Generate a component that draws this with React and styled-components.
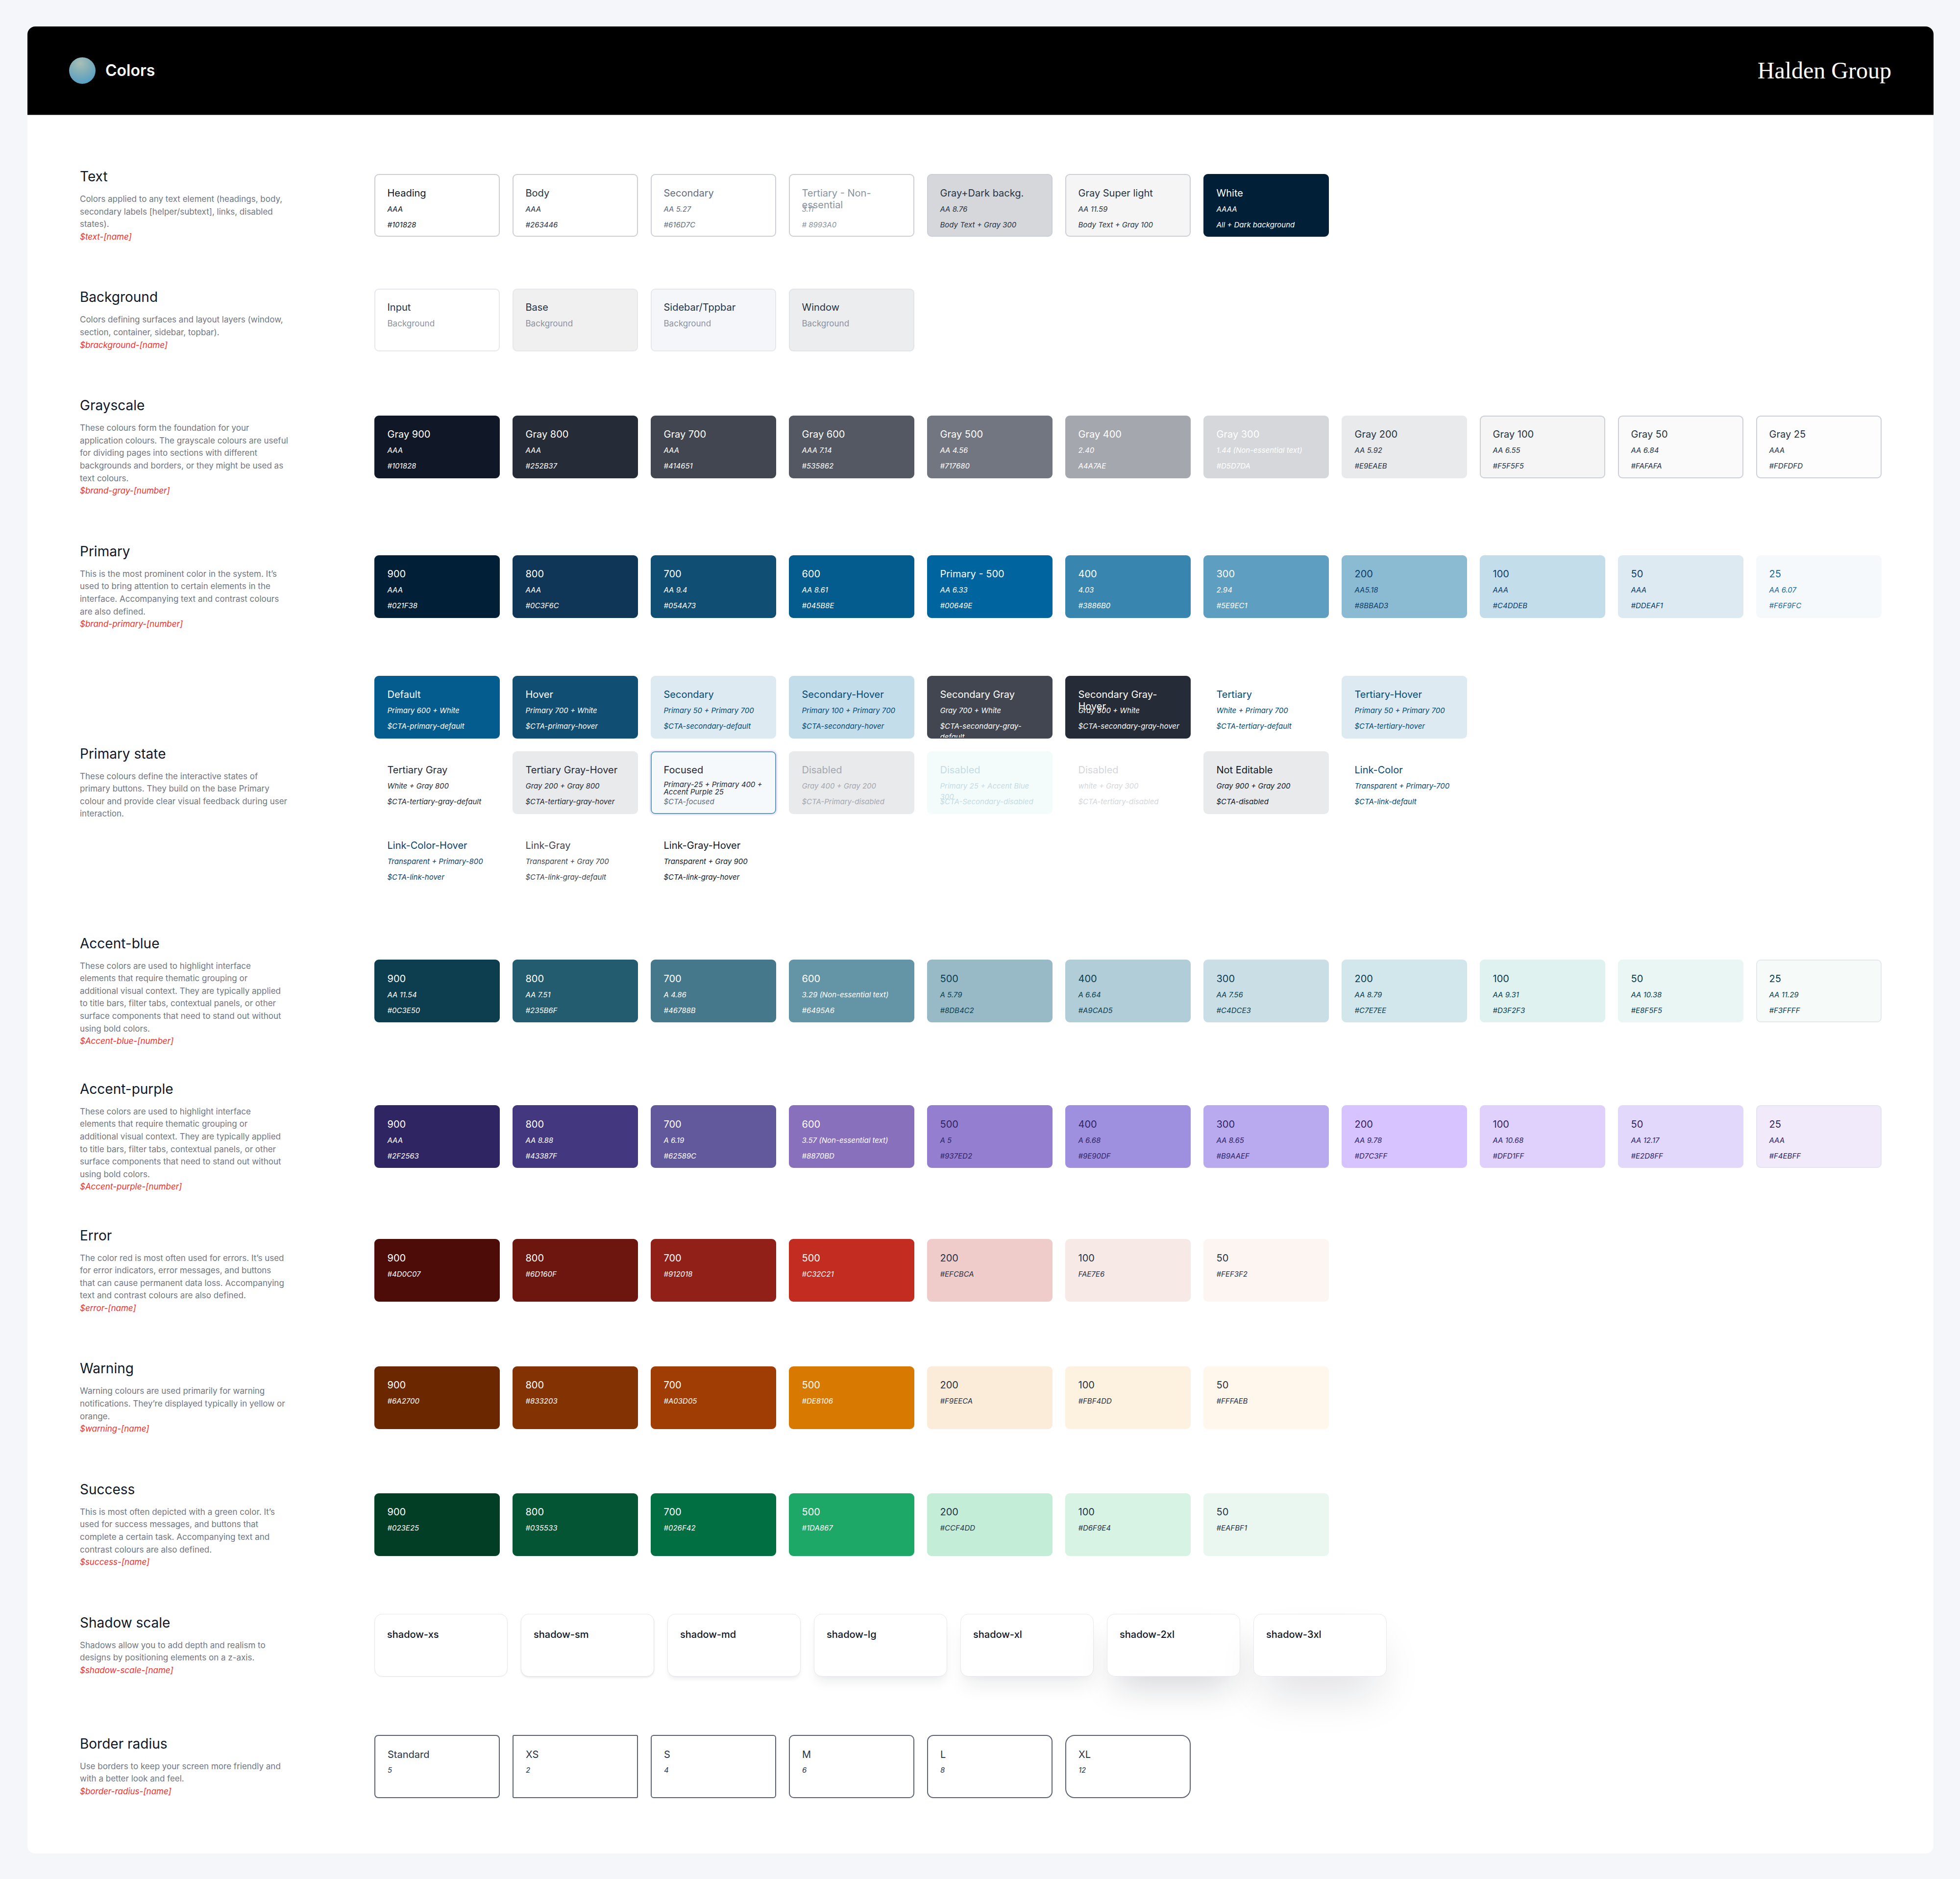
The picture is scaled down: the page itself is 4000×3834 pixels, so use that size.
import React from "react"
import styled, { createGlobalStyle } from "styled-components"

const GlobalStyle = createGlobalStyle`
html, body {
    margin: 0;
    padding: 0;
    background: #f5f6fa;
}
* {
    box-sizing: border-box;
}
`

const WHITE = "#FFFFFF"
const INK = "#263446"
const P700 = "#054A73"
const BLUE = "#0C3E50"
const PURPLE = "#2F2563"
const EDGE = "#CDCFD6"

const card = (title, sub, code, bg, fg, extra = {}) => ({ title, sub, code, bg, fg, ...extra })

const textCards = [
    card("Heading", "AAA", "#101828", WHITE, "#101828", { edge: EDGE }),
    card("Body", "AAA", "#263446", WHITE, "#263446", { edge: EDGE }),
    card("Secondary", "AA 5.27", "#616D7C", WHITE, "#616D7C", { edge: EDGE }),
    card("Tertiary - Non-essential", "3.11", "# 8993A0", WHITE, "#8993A0", { edge: EDGE }),
    card("Gray+Dark backg.", "AA 8.76", "Body Text + Gray 300", "#D5D7DA", INK, { edge: EDGE }),
    card("Gray Super light", "AA 11.59", "Body Text + Gray 100", "#F5F5F5", INK, { edge: EDGE }),
    card("White", "AAAA", "All + Dark background", "#021F38", WHITE),
]

const backgroundCards = [
    { title: "Input", bg: WHITE, edge: "#E6E8EC" },
    { title: "Base", bg: "#F0F0F0", edge: "#E6E8EC" },
    { title: "Sidebar/Tppbar", bg: "#F4F6F9", edge: "#E6E8EC" },
    { title: "Window", bg: "#ECEDEE", edge: "#E2E4E8" },
]

const grayCards = [
    card("Gray 900", "AAA", "#101828", "#101828", WHITE),
    card("Gray 800", "AAA", "#252B37", "#252B37", WHITE),
    card("Gray 700", "AAA", "#414651", "#414651", WHITE),
    card("Gray 600", "AAA 7.14", "#535862", "#535862", WHITE),
    card("Gray 500", "AA 4.56", "#717680", "#717680", WHITE),
    card("Gray 400", "2.40", "A4A7AE", "#A4A7AE", WHITE),
    card("Gray 300", "1.44 (Non-essential text)", "#D5D7DA", "#D5D7DA", WHITE),
    card("Gray 200", "AA 5.92", "#E9EAEB", "#E9EAEB", INK),
    card("Gray 100", "AA 6.55", "#F5F5F5", "#F5F5F5", INK, { edge: EDGE }),
    card("Gray 50", "AA 6.84", "#FAFAFA", "#FAFAFA", INK, { edge: EDGE }),
    card("Gray 25", "AAA", "#FDFDFD", "#FDFDFD", INK, { edge: EDGE }),
]

const primaryCards = [
    card("900", "AAA", "#021F38", "#021F38", WHITE),
    card("800", "AAA", "#0C3F6C", "#0F3557", WHITE),
    card("700", "AA 9.4", "#054A73", "#114E73", WHITE),
    card("600", "AA 8.61", "#045B8E", "#045B8E", WHITE),
    card("Primary - 500", "AA 6.33", "#00649E", "#00649E", WHITE),
    card("400", "4.03", "#3886B0", "#3886B0", WHITE),
    card("300", "2.94", "#5E9EC1", "#5E9EC1", WHITE),
    card("200", "AA5.18", "#8BBAD3", "#8BBAD3", "#0C3F6C"),
    card("100", "AAA", "#C4DDEB", "#C4DDEB", "#0C3F6C"),
    card("50", "AAA", "#DDEAF1", "#DDEAF1", "#0C3F6C"),
    card("25", "AA 6.07", "#F6F9FC", "#F6F9FC", "#1D6A96"),
]

const stateCards = [
    card("Default", "Primary 600 + White", "$CTA-primary-default", "#045B8E", WHITE),
    card("Hover", "Primary 700 + White", "$CTA-primary-hover", "#114E73", WHITE),
    card("Secondary", "Primary 50 + Primary 700", "$CTA-secondary-default", "#DDEAF1", P700),
    card("Secondary-Hover", "Primary 100 + Primary 700", "$CTA-secondary-hover", "#C4DDEB", P700),
    card("Secondary Gray", "Gray 700 + White", "$CTA-secondary-gray-default", "#414651", WHITE),
    card("Secondary Gray-Hover", "Gray 800 + White", "$CTA-secondary-gray-hover", "#252B37", WHITE),
    card("Tertiary", "White + Primary 700", "$CTA-tertiary-default", WHITE, P700),
    card("Tertiary-Hover", "Primary 50 + Primary 700", "$CTA-tertiary-hover", "#DDEAF1", P700),
    card("Tertiary Gray", "White + Gray 800", "$CTA-tertiary-gray-default", WHITE, "#252B37"),
    card("Tertiary Gray-Hover", "Gray 200 + Gray 800", "$CTA-tertiary-gray-hover", "#E9EAEB", "#252B37"),
    card("Focused", "Primary-25 + Primary 400 + Accent Purple 25", "$CTA-focused", "#F6F9FC", "#1F2937", { focused: true, codeColor: "#616D7C" }),
    card("Disabled", "Gray 400 + Gray 200", "$CTA-Primary-disabled", "#E9EAEB", "#A4A7AE"),
    card("Disabled", "Primary 25 + Accent Blue 300", "$CTA-Secondary-disabled", "#F4FBFB", "#C4DCE3"),
    card("Disabled", "white + Gray 300", "$CTA-tertiary-disabled", WHITE, "#D5D7DA"),
    card("Not Editable", "Gray 900 + Gray 200", "$CTA-disabled", "#E9EAEB", "#101828"),
    card("Link-Color", "Transparent + Primary-700", "$CTA-link-default", WHITE, P700),
    card("Link-Color-Hover", "Transparent + Primary-800", "$CTA-link-hover", WHITE, "#0C3F6C"),
    card("Link-Gray", "Transparent + Gray 700", "$CTA-link-gray-default", WHITE, "#414651"),
    card("Link-Gray-Hover", "Transparent + Gray 900", "$CTA-link-gray-hover", WHITE, "#101828"),
]

const accentBlueCards = [
    card("900", "AA 11.54", "#0C3E50", "#0C3E50", WHITE),
    card("800", "AA 7.51", "#235B6F", "#235B6F", WHITE),
    card("700", "A 4.86", "#46788B", "#46788B", WHITE),
    card("600", "3.29 (Non-essential text)", "#6495A6", "#6495A6", WHITE),
    card("500", "A 5.79", "#8DB4C2", "#97BAC6", BLUE),
    card("400", "A 6.64", "#A9CAD5", "#B0CDD8", BLUE),
    card("300", "AA 7.56", "#C4DCE3", "#CADEE5", BLUE),
    card("200", "AA 8.79", "#C7E7EE", "#D2E7EC", BLUE),
    card("100", "AA 9.31", "#D3F2F3", "#DFF2F0", BLUE),
    card("50", "AA 10.38", "#E8F5F5", "#EAF6F4", BLUE),
    card("25", "AA 11.29", "#F3FFFF", "#F6FBFA", BLUE, { edge: "#E6E8EC" }),
]

const accentPurpleCards = [
    card("900", "AAA", "#2F2563", "#2F2563", WHITE),
    card("800", "AA 8.88", "#43387F", "#43387F", WHITE),
    card("700", "A 6.19", "#62589C", "#62589C", WHITE),
    card("600", "3.57 (Non-essential text)", "#8870BD", "#8870BD", WHITE),
    card("500", "A 5", "#937ED2", "#937ED0", PURPLE),
    card("400", "A 6.68", "#9E90DF", "#9E90DF", PURPLE),
    card("300", "AA 8.65", "#B9AAEF", "#B9AAEF", PURPLE),
    card("200", "AA 9.78", "#D7C3FF", "#D7C3FF", PURPLE),
    card("100", "AA 10.68", "#DFD1FF", "#DFD1FB", PURPLE),
    card("50", "AA 12.17", "#E2D8FF", "#E2D8FC", PURPLE),
    card("25", "AAA", "#F4EBFF", "#F0EAFB", PURPLE, { edge: "#E6E4F0" }),
]

const shortCard = (title, sub, bg, fg) => ({ title, sub, bg, fg })

const errorCards = [
    shortCard("900", "#4D0C07", "#4D0C07", WHITE),
    shortCard("800", "#6D160F", "#6D160F", WHITE),
    shortCard("700", "#912018", "#912018", WHITE),
    shortCard("500", "#C32C21", "#C32C21", WHITE),
    shortCard("200", "#EFCBCA", "#EFCBCA", INK),
    shortCard("100", "FAE7E6", "#F7E9E6", INK),
    shortCard("50", "#FEF3F2", "#FCF5F2", INK),
]

const warningCards = [
    shortCard("900", "#6A2700", "#6A2700", WHITE),
    shortCard("800", "#833203", "#833203", WHITE),
    shortCard("700", "#A03D05", "#A03D05", WHITE),
    shortCard("500", "#DE8106", "#D87A02", WHITE),
    shortCard("200", "#F9EECA", "#FBEBD9", INK),
    shortCard("100", "#FBF4DD", "#FDF1E0", INK),
    shortCard("50", "#FFFAEB", "#FFF6EC", INK),
]

const successCards = [
    shortCard("900", "#023E25", "#023E25", WHITE),
    shortCard("800", "#035533", "#035533", WHITE),
    shortCard("700", "#026F42", "#026F42", WHITE),
    shortCard("500", "#1DA867", "#1DA867", WHITE),
    shortCard("200", "#CCF4DD", "#C3EDD6", INK),
    shortCard("100", "#D6F9E4", "#D6F3E3", INK),
    shortCard("50", "#EAFBF1", "#EAF7F0", INK),
]

const shadows = [
    ["shadow-xs", "0 1px 2px rgba(16, 24, 40, .06)"],
    ["shadow-sm", "0 2px 4px rgba(16, 24, 40, .08), 0 1px 2px rgba(16, 24, 40, .05)"],
    ["shadow-md", "0 6px 10px -2px rgba(16, 24, 40, .08), 0 2px 4px -2px rgba(16, 24, 40, .05)"],
    ["shadow-lg", "0 16px 24px -6px rgba(16, 24, 40, .08), 0 4px 8px -2px rgba(16, 24, 40, .03)"],
    ["shadow-xl", "0 26px 38px -8px rgba(16, 24, 40, .08), 0 10px 12px -6px rgba(16, 24, 40, .03)"],
    ["shadow-2xl", "0 38px 70px -18px rgba(16, 24, 40, .18)"],
    ["shadow-3xl", "0 50px 90px -18px rgba(16, 24, 40, .14)"],
]

const radii = [
    ["Standard", "5", 8],
    ["XS", "2", 3],
    ["S", "4", 6],
    ["M", "6", 10],
    ["L", "8", 13],
    ["XL", "12", 19],
]

const App = () => {
    return (
        <Page>
            <GlobalStyle />
            <Sheet>
                <Header>
                    <Brand>
                        <Globe />
                        <HeaderTitle>Colors</HeaderTitle>
                    </Brand>
                    <Company>Halden Group</Company>
                </Header>
                <Body>
                    <Section>
                        <Intro title="Text" token="$text-[name]">
                            Colors applied to any text element (headings, body, secondary labels [helper/subtext], links, disabled states).
                        </Intro>
                        <Swatches cards={textCards} />
                    </Section>
                    <Section>
                        <Intro title="Background" token="$brackground-[name]">
                            Colors defining surfaces and layout layers (window, section, container, sidebar, topbar).
                        </Intro>
                        <CardRow>
                            {backgroundCards.map((el) => (
                                <Card key={el.title} $bg={el.bg} $fg={INK} $edge={el.edge}>
                                    <CardTitle>{el.title}</CardTitle>
                                    <PlainSub>Background</PlainSub>
                                </Card>
                            ))}
                        </CardRow>
                    </Section>
                    <Section>
                        <Intro title="Grayscale" token="$brand-gray-[number]">
                            These colours form the foundation for your application colours. The grayscale colours are useful for dividing pages into sections with different backgrounds and borders, or they might be used as text colours.
                        </Intro>
                        <Swatches cards={grayCards} />
                    </Section>
                    <Section>
                        <Intro title="Primary" token="$brand-primary-[number]">
                            This is the most prominent color in the system. It’s used to bring attention to certain elements in the interface. Accompanying text and contrast colours are also defined.
                        </Intro>
                        <Swatches cards={primaryCards} />
                    </Section>
                    <Section>
                        <Intro title="Primary state">
                            These colours define the interactive states of primary buttons. They build on the base Primary colour and provide clear visual feedback during user interaction.
                        </Intro>
                        <StateGrid>
                            {stateCards.map((el) => <Swatch key={el.code} {...el} />)}
                        </StateGrid>
                    </Section>
                    <Section>
                        <Intro title="Accent-blue" token="$Accent-blue-[number]" narrow>
                            These colors are used to highlight interface elements that require thematic grouping or additional visual context. They are typically applied to title bars, filter tabs, contextual panels, or other surface components that need to stand out without using bold colors.
                        </Intro>
                        <Swatches cards={accentBlueCards} />
                    </Section>
                    <Section $space={66}>
                        <Intro title="Accent-purple" token="$Accent-purple-[number]" narrow>
                            These colors are used to highlight interface elements that require thematic grouping or additional visual context. They are typically applied to title bars, filter tabs, contextual panels, or other surface components that need to stand out without using bold colors.
                        </Intro>
                        <Swatches cards={accentPurpleCards} />
                    </Section>
                    <Section $space={67.5}>
                        <Intro title="Error" token="$error-[name]">
                            The color red is most often used for errors. It’s used for error indicators, error messages, and buttons that can cause permanent data loss. Accompanying text and contrast colours are also defined.
                        </Intro>
                        <Swatches cards={errorCards} />
                    </Section>
                    <Section>
                        <Intro title="Warning" token="$warning-[name]">
                            Warning colours are used primarily for warning notifications. They’re displayed typically in yellow or orange.
                        </Intro>
                        <Swatches cards={warningCards} />
                    </Section>
                    <Section>
                        <Intro title="Success" token="$success-[name]">
                            This is most often depicted with a green color. It’s used for success messages, and buttons that complete a certain task. Accompanying text and contrast colours are also defined.
                        </Intro>
                        <Swatches cards={successCards} />
                    </Section>
                    <Section>
                        <Intro title="Shadow scale" token="$shadow-scale-[name]">
                            Shadows allow you to add depth and realism to designs by positioning elements on a z-axis.
                        </Intro>
                        <ShadowRow>
                            {shadows.map(([name, shadow]) => (
                                <ShadowCard key={name} $shadow={shadow}>{name}</ShadowCard>
                            ))}
                        </ShadowRow>
                    </Section>
                    <Section $space={118}>
                        <Intro title="Border radius" token="$border-radius-[name]">
                            Use borders to keep your screen more friendly and with a better look and feel.
                        </Intro>
                        <CardRow>
                            {radii.map(([name, value, radius]) => (
                                <RadiusCard key={name} $radius={radius}>
                                    <CardTitle>{name}</CardTitle>
                                    <CardLine>{value}</CardLine>
                                </RadiusCard>
                            ))}
                        </CardRow>
                    </Section>
                </Body>
            </Sheet>
        </Page>
    )
}

const Intro = ({ title, token, narrow, children }) => (
    <IntroBox>
        <SectionTitle>{title}</SectionTitle>
        <Description $narrow={narrow}>{children}</Description>
        {token && <Token>{token}</Token>}
    </IntroBox>
)

const Swatches = ({ cards }) => (
    <CardRow>
        {cards.map((el) => <Swatch key={el.title + el.sub} {...el} />)}
    </CardRow>
)

const Swatch = ({ title, sub, code, bg, fg, edge, focused, codeColor }) => (
    <Card $bg={bg} $fg={fg} $edge={edge} $focused={focused}>
        <CardTitle>{title}</CardTitle>
        <CardLine $tight={focused}>{sub}</CardLine>
        {code && <CardLine $color={codeColor}>{code}</CardLine>}
    </Card>
)

const Page = styled.div`
width: 4000px;
min-height: 3834px;
padding: 54px 54px 52px 56px;
font-family: Inter, "Liberation Sans", sans-serif;
background-color: #f5f6fa;
`
const Sheet = styled.main`
background-color: #fff;
border-radius: 16px;
overflow: hidden;
`
const Header = styled.header`
height: 181px;
padding: 0 86px 0 85px;
display: flex;
align-items: center;
justify-content: space-between;
background-color: #000;
border-bottom: 1px solid #8f8f8f;
`
const Brand = styled.div`
display: flex;
align-items: center;
gap: 20px;
`
const Globe = styled.span`
width: 54px;
height: 54px;
border-radius: 50%;
background: radial-gradient(circle at 42% 22%, #a8bfb8 0%, #85b0b6 35%, #5fa2c3 72%, #4f96b9 100%);
`
const HeaderTitle = styled.h1`
margin: 0;
color: #fff;
font-size: 32px;
line-height: 40px;
font-weight: 600;
`
const Company = styled.div`
color: #fff;
font-family: "Liberation Serif", serif;
font-size: 48px;
line-height: 56px;
`
const Body = styled.div`
padding: 107px 0 113px 107px;
`
const Section = styled.section`
display: flex;
align-items: center;
margin-top: ${(props) => props.$space ?? 92}px;

&:first-child {
    margin-top: 0;
}
`
const IntroBox = styled.div`
width: 425px;
margin-right: 176px;
flex-shrink: 0;
`
const SectionTitle = styled.h2`
margin: 0 0 16px;
color: #101828;
font-size: 28px;
line-height: 36px;
font-weight: 400;
`
const Description = styled.p`
margin: 0;
color: #717680;
font-size: 17px;
line-height: 25.6px;
${(props) => props.$narrow && "max-width: 420px;"}
`
const Token = styled.div`
color: #f4302a;
font-size: 17px;
line-height: 25.6px;
font-style: italic;
`
const CardRow = styled.div`
display: flex;
gap: 26px;
`
const StateGrid = styled.div`
display: grid;
grid-template-columns: repeat(8, 256px);
gap: 26px;
`
const Card = styled.div`
width: 256px;
height: 128px;
flex-shrink: 0;
padding: 24.5px 20px 0 24.5px;
overflow: hidden;
display: flex;
flex-direction: column;
gap: 10px;
border: 2px solid ${(props) => props.$edge || props.$bg};
border-radius: 9px;
background-color: ${(props) => props.$bg};
color: ${(props) => props.$fg};
${(props) => props.$focused && `
    border-color: #5e9ec1;
    box-shadow: 0 0 0 3px #f4ebff;
    overflow: visible;
`}
`
const CardTitle = styled.div`
height: 24px;
flex-shrink: 0;
font-size: 20px;
line-height: 24px;
`
const CardLine = styled.div`
height: 22px;
flex-shrink: 0;
font-size: 15px;
line-height: ${(props) => props.$tight ? "15px" : "22px"};
font-style: italic;
${(props) => props.$color && `color: ${props.$color};`}
`
const PlainSub = styled.div`
font-size: 17px;
line-height: 22px;
color: #8993a0;
`
const ShadowRow = styled.div`
display: flex;
gap: 27px;
`
const ShadowCard = styled.div`
width: 272px;
height: 128px;
padding: 29px 25px 0;
border: 1.5px solid #e6e8ec;
border-radius: 16px;
background-color: #fff;
color: #101828;
font-size: 20px;
line-height: 24px;
font-weight: 500;
box-shadow: ${(props) => props.$shadow};
`
const RadiusCard = styled.div`
width: 256px;
height: 129px;
flex-shrink: 0;
padding: 26px 25px 0;
display: flex;
flex-direction: column;
gap: 9px;
border: 2px solid #5b6170;
border-radius: ${(props) => props.$radius}px;
background-color: #fff;
color: #263446;
`

export default App
